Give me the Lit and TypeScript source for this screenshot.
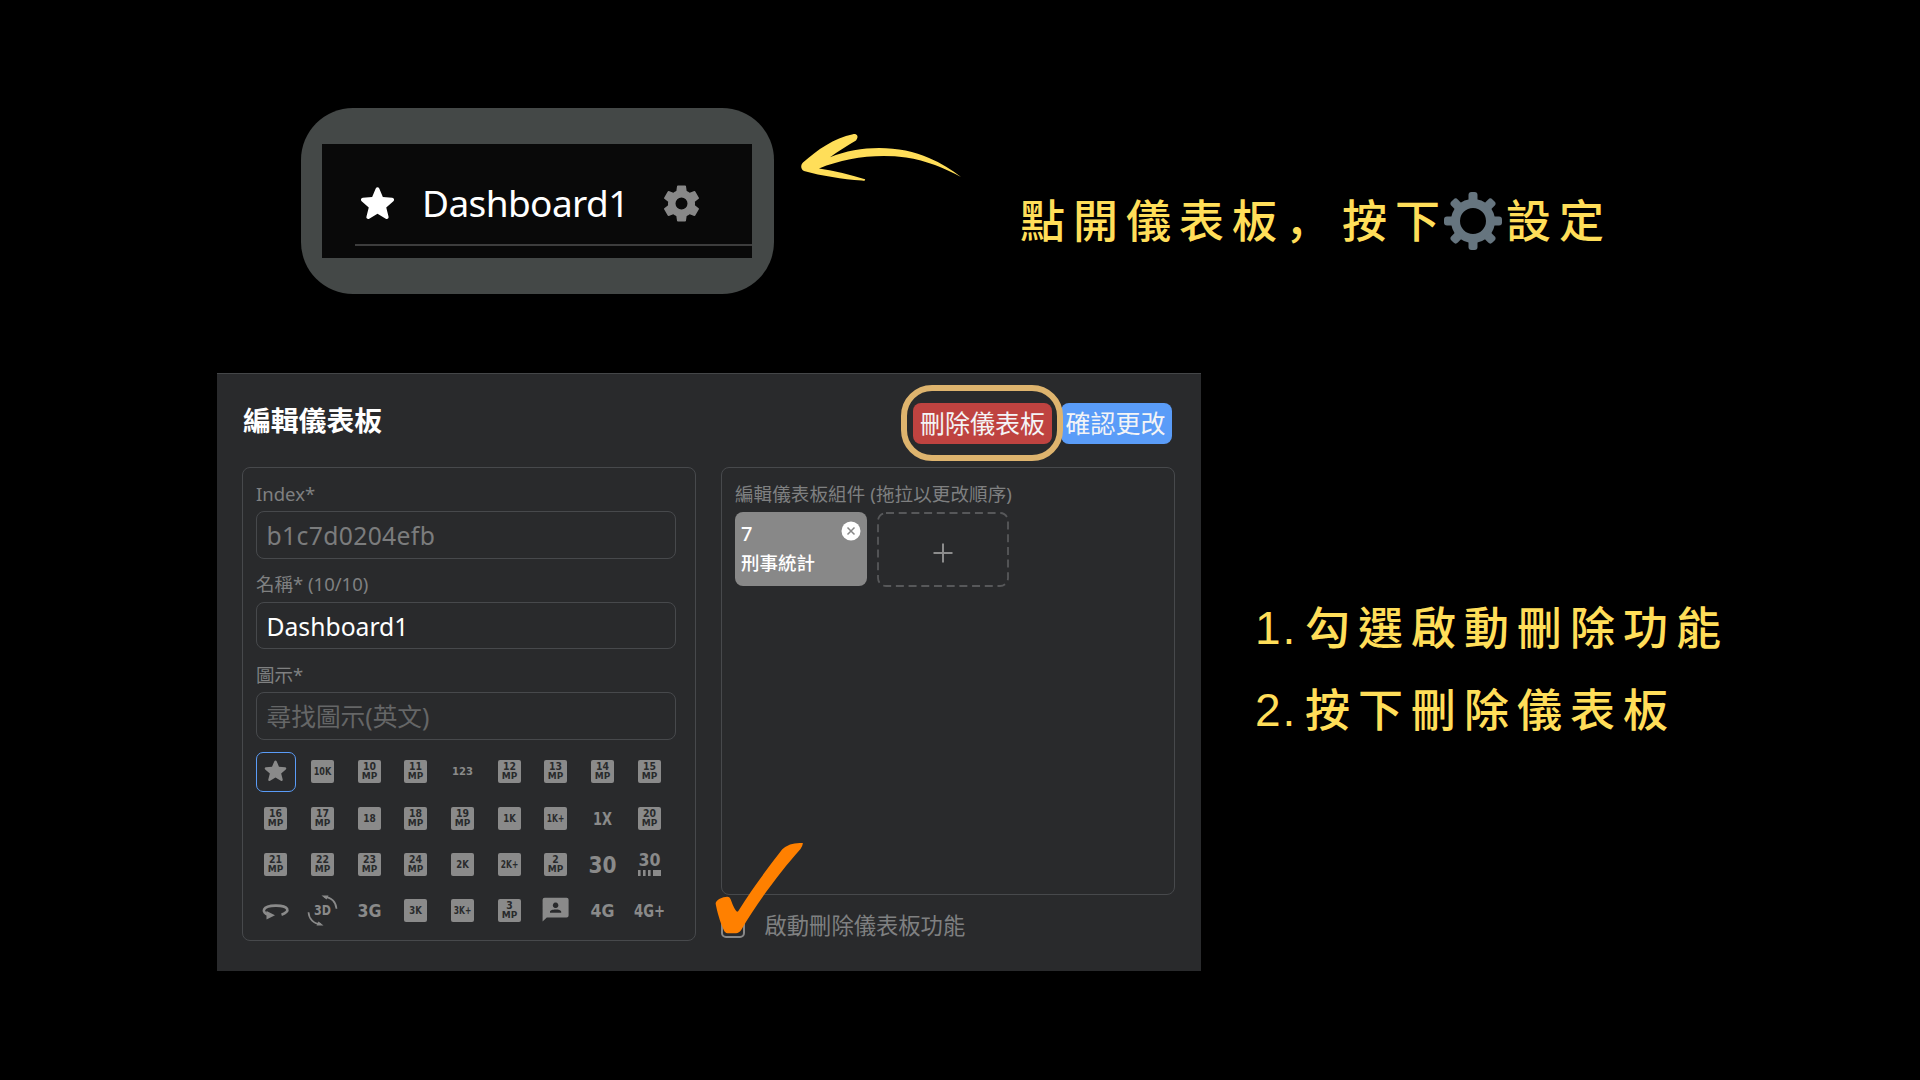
import { LitElement, html, svg, css } from "lit";
import { customElement } from "lit/decorators.js";

type Icon = { kind: string; a?: string; b?: string };

const mp = (a: string): Icon => ({ kind: "mp", a, b: "MP" });
const box = (a: string): Icon => ({ kind: "box", a });
const txt = (a: string): Icon => ({ kind: "txt", a });

const ICONS: Icon[] = [
  { kind: "star" }, box("10K"), mp("10"), mp("11"), { kind: "small", a: "123" }, mp("12"), mp("13"), mp("14"), mp("15"),
  mp("16"), mp("17"), box("18"), mp("18"), mp("19"), box("1K"), box("1K+"), txt("1X"), mp("20"),
  mp("21"), mp("22"), mp("23"), mp("24"), box("2K"), box("2K+"), mp("2"), { kind: "big", a: "30" }, { kind: "fps", a: "30" },
  { kind: "rotate" }, { kind: "rot3d" }, txt("3G"), box("3K"), box("3K+"), mp("3"), { kind: "person" }, txt("4G"), { kind: "wide", a: "4G+" },
];

const STAR = "M12 17.3 6.9 20.4Q6.1 20.8 5.5 20.3T5.2 19L6.6 13.4 2.2 9.6Q1.6 9 1.8 8.3T2.9 7.5L8.7 7 10.9 1.7Q11.3 1 12 1T13.1 1.7L15.3 7 21.1 7.5Q22 7.6 22.2 8.3T21.8 9.6L17.4 13.4 18.8 19Q19 19.8 18.5 20.3T17.1 20.4Z";
const GEAR = "M19.14 12.94c.04-.3.06-.61.06-.94 0-.32-.02-.64-.07-.94l2.03-1.58a.49.49 0 0 0 .12-.61l-1.92-3.32a.49.49 0 0 0-.59-.22l-2.39.96c-.5-.38-1.03-.7-1.62-.94l-.36-2.54a.48.48 0 0 0-.48-.41h-3.84a.47.47 0 0 0-.47.41l-.36 2.54c-.59.24-1.13.57-1.62.94l-2.39-.96a.48.48 0 0 0-.59.22L2.74 8.87a.47.47 0 0 0 .12.61l2.03 1.58c-.05.3-.09.63-.09.94s.02.64.07.94l-2.03 1.58a.49.49 0 0 0-.12.61l1.92 3.32c.12.22.37.29.59.22l2.39-.96c.5.38 1.03.7 1.62.94l.36 2.54c.05.24.24.41.48.41h3.84c.24 0 .44-.17.47-.41l.36-2.54c.59-.24 1.13-.56 1.62-.94l2.39.96c.22.08.47 0 .59-.22l1.92-3.32a.47.47 0 0 0-.12-.61zM12 15.2A3.200 3.200 0 1 1 12 8.800a3.200 3.200 0 0 1 0 6.400z";

@customElement("icon-glyph")
class IconGlyph extends LitElement {
  static properties = { icon: { attribute: false } };
  declare icon: Icon;
  static styles = css`
    :host { display: block; width: 31px; height: 31px; }
    svg { display: block; width: 31px; height: 31px; overflow: visible; fill: #8a8a8a; }
    text { font-family: "DejaVu Sans", sans-serif; font-weight: 700; text-anchor: middle; }
    .cut { fill: #292a2c; }
    .line { fill: none; stroke: #8a8a8a; stroke-width: 1.7; }
  `;
  private label(s: string, y: number, size: number, len: number, cls = "") {
    return svg`<text class=${cls} x="15.5" y=${y} font-size=${size} textLength=${len} lengthAdjust="spacingAndGlyphs">${s}</text>`;
  }
  private body() {
    const i = this.icon;
    const a = i.a ?? "";
    const square = svg`<rect x="4" y="4" width="23" height="23" rx="2" />`;
    switch (i.kind) {
      case "mp":
        return svg`${square}${this.label(a, 14.2, 9.8, a.length * 6.5, "cut")}${this.label("MP", 23, 9.4, 15.5, "cut")}`;
      case "box":
        return svg`${square}${this.label(a, 18.9, 9.8, a.length === 3 ? 17.5 : 12.5, "cut")}`;
      case "txt":
        return this.label(a, 21.5, 17, a === "1X" ? 19 : 24);
      case "wide":
        return svg`${this.label(a, 21.5, 17, 31)}`;
      case "big":
        return this.label(a, 24, 23.5, 28);
      case "small":
        return this.label(a, 19.2, 10.5, 21);
      case "fps":
        return svg`${this.label(a, 17, 17, 22)}<path d="M4 21h2.6v6H4zM9 21h2.6v6H9zM14 21h2.6v6H14zM19 21h8v6h-8z" />`;
      case "star":
        return svg`<g transform="translate(2.9 3.4) scale(1.05)"><path d=${STAR} /></g>`;
      case "rotate":
        return svg`<path class="line" style="stroke-width:2.6" d="M8.5 19.8C1 17.5 2 10.8 15.5 10.6s15.500 5.900 6 9.200" /><path d="M13.500 15.600v8.600l-8.500-4.300z" transform="translate(2 .2) rotate(180 9 20)" />`;
      case "rot3d":
        return svg`${this.label("3D", 20.4, 14, 17)}<path class="line" d="M17 1.800C24.500 2 29 7 29.500 13.800M14 29.200C6.500 29 2 24 1.500 17.200" /><path d="M14.500.6h7l-2 4zM16.500 30.400h-7l2-4z" />`;
      case "person":
        return svg`<path fill-rule="evenodd" d="M4.600 2.700h22a2 2 0 0 1 2 2v15.700a2 2 0 0 1-2 2H6.800L2.600 26.500V4.700a2 2 0 0 1 2-2zM15.600 7.500a2.800 2.800 0 1 0 .01 0zM10 17.800h11.200v-1c0-3-11.200-3-11.200 0z" />`;
    }
    return svg``;
  }
  render() {
    return html`<svg viewBox="0 0 31 31">${this.body()}</svg>`;
  }
}

@customElement("app-root")
class AppRoot extends LitElement {
  static styles = css`
    :host { display: block; width: 1920px; height: 1080px; background: #000; overflow: hidden;
      font-family: "Noto Sans", "Noto Sans CJK TC", sans-serif; --muted: #7f8081; --line: #47494c; }
    * { box-sizing: border-box; }
    svg { display: block; }
    .slide { width: 1920px; height: 1080px; padding-top: 108px; display: flex; flex-direction: column; gap: 79px; }
    .top { display: flex; height: 186px; padding-left: 301px; }
    .frame { width: 473px; height: 186px; border-radius: 52px; background: #444847; padding: 36px 22px 36px 21px; }
    .shot { height: 114px; background: #090909; padding: 0 0 0 33px; display: flex; flex-direction: column; }
    .bar { height: 102px; border-bottom: 2px solid #3d3d3d; display: flex; align-items: center; padding: 18px 0 0 5px; }
    .star { width: 35px; height: 35px; fill: #fff; flex: none; }
    .name { margin-left: 27px; width: 212px; flex: none; color: #fff; font-size: 37px; line-height: 50px; letter-spacing: -0.6px; white-space: nowrap; }
    .cog { margin-left: 25px; width: 45px; height: 45px; fill: #888; flex: none; }
    .arrow { margin: 24px 0 0 26px; width: 164px; height: 52px; fill: #ffde59; }
    .hand { color: #ffde59; font-family: "Noto Sans CJK TC", sans-serif; font-weight: 500; font-size: 45px; letter-spacing: 8px; line-height: 60px; white-space: nowrap; }
    .note { display: flex; align-items: center; height: 60px; margin: 83px 0 0 56px; }
    .note span { padding-bottom: 5px; }
    .comma { font-family: "Noto Sans CJK JP", sans-serif; margin-right: 4px; }
    .note svg { width: 60px; height: 60px; margin: 0 3px 0 -5px; }
    .bottom { display: flex; padding-left: 217px; }
    .panel { width: 984px; height: 598px; background: #292a2c; border-top: 1px solid #444648; padding: 0 25px; display: flex; flex-direction: column; }
    .head { height: 93px; flex: none; display: flex; align-items: center; padding: 6px 4px 0 1px; }
    h1 { margin: 0; flex: 1; color: #fff; font-size: 27.800px; line-height: 40px; font-weight: 700; padding-bottom: 7px; }
    .btn { position: relative; height: 40.500px; border-radius: 8px; color: #f4f4f6; font-size: 25px; line-height: 40px; text-align: center; white-space: nowrap; }
    .del { width: 139px; background: #bf4340; margin-right: 9px; }
    .ok { width: 111px; background: #5a9cf8; padding-right: 2px; }
    .ring { position: absolute; z-index: 1; left: -12px; top: -18px; width: 162px; height: 76px; border: 6px solid #deb46e; border-radius: 31px; }
    .cols { display: flex; gap: 24.500px; }
    .box { width: 454px; border: 1.500px solid var(--line); border-radius: 8px; }
    .form { height: 474px; padding: 11.500px 12.500px; display: flex; flex-direction: column; }
    .form > * { flex: none; }
    .label { color: var(--muted); font-size: 18.500px; line-height: 28px; height: 31.500px; white-space: nowrap; }
    .form .label { padding-left: .5px; line-height: 27px; }
    .field { width: 420.500px; height: 47.500px; border: 1.500px solid var(--line); border-radius: 8px; padding-left: 10px; font-size: 24.700px; line-height: 47px; white-space: nowrap; margin-bottom: 11.500px; color: #7b7c7d; }
    .code { letter-spacing: .35px; }
    .white { color: #fff; }
    .dim { color: #656667; margin-bottom: 9px; }
    .icons { display: grid; grid-template-columns: repeat(9, 46.700px); grid-auto-rows: 46.400px; margin: 0 0 0 -3px; }
    .cell { display: flex; align-items: center; justify-content: center; }
    .cell.on { margin: 3.400px; border: 1.500px solid #5a9cf8; border-radius: 7px; }
    .right { display: flex; flex-direction: column; }
    .parts { height: 428px; padding: 12px 13.500px; }
    .parts .label { letter-spacing: .12px; }
    .tiles { display: flex; gap: 10px; }
    .tile { width: 132px; height: 74.500px; border-radius: 8px; background: #888; color: #fff; padding: 7px 6px; font-size: 18.500px; line-height: 29px; font-weight: 500; }
    .tile-top { display: flex; justify-content: space-between; }
    .tile-top span { font-size: 20px; }
    .tile-top svg { width: 20px; height: 20px; margin: 2.500px 0 0; }
    .add { display: block; width: 132px; height: 75px; }
    .agree { display: flex; align-items: center; height: 24px; margin-top: 19px; color: var(--muted); font-size: 22.300px; line-height: 24px; }
    .check { position: relative; width: 24px; height: 24px; border: 2px solid #888; border-radius: 5px; margin: 0 19.500px 0 .5px; }
    .tick { position: absolute; left: -9px; top: -75px; width: 90px; height: 94px; fill: #ff8000; }
    .steps { margin: 223px 0 0 53px; }
    .step { height: 82px; display: flex; }
    .num { width: 51px; font-family: "Liberation Sans", "Noto Sans", sans-serif; font-size: 46px; letter-spacing: 2px; line-height: 65px; font-weight: 400; padding-left: 1px; }
  `;

  render() {
    return html`
      <div class="slide">
        <div class="top">
          <div class="frame"><div class="shot"><div class="bar">
            <svg class="star" viewBox="1.200 .5 21.600 21"><path d=${STAR} /></svg>
            <div class="name">Dashboard1</div>
            <svg class="cog" viewBox="0 0 24 24"><path d=${GEAR} /></svg>
          </div></div></div>
          <svg class="arrow" viewBox="800 132 164 52"><path d="M804 171C800.500 169 800.500 165 803 162.500C817 150 834 138 853 134.200C856.500 133.500 859.500 136 856 140.500C848 145.500 838 151 830 157.300C862 144 902 145.500 929 158C941 163 952 170 961 177C945 168.500 926 160.500 906 157.600C876 153.500 845 158 819 168.500C835 171 850 174.500 865 179.200Q866 181 862 180.600C842 179 822 176 804 171Z" /></svg>
          <div class="hand note"><span>點開儀表板</span><span class="comma" lang="ja">，</span><span>按下</span><svg viewBox="0 0 60 60" fill="#66757f">
            <circle cx="30" cy="30" r="17.500" fill="none" stroke="#66757f" stroke-width="9" />
            ${[0, 45, 90, 135, 180, 225, 270, 315].map((d) => svg`<path transform="rotate(${d} 30 30)" d="M25.500 11V4q0-3 3-3h3q3 0 3 3v7z" />`)}
          </svg><span>設定</span></div>
        </div>
        <div class="bottom">
          <div class="panel">
            <div class="head">
              <h1>編輯儀表板</h1>
              <div class="btn del">刪除儀表板<div class="ring"></div></div>
              <div class="btn ok">確認更改</div>
            </div>
            <div class="cols">
              <div class="box form">
                <div class="label">Index*</div><div class="field code">b1c7d0204efb</div>
                <div class="label">名稱* (10/10)</div><div class="field white">Dashboard1</div>
                <div class="label">圖示*</div><div class="field dim">尋找圖示(英文)</div>
                <div class="icons">${ICONS.map((i, n) => html`<div class="cell ${n === 0 ? "on" : ""}"><icon-glyph .icon=${i}></icon-glyph></div>`)}</div>
              </div>
              <div class="right">
                <div class="box parts">
                  <div class="label">編輯儀表板組件 (拖拉以更改順序)</div>
                  <div class="tiles">
                    <div class="tile">
                      <div class="tile-top"><span>7</span><svg viewBox="0 0 20 20"><circle cx="10" cy="10" r="9.500" fill="#fff" /><path d="M6.500 6.500l7 7m0-7l-7 7" stroke="#888" stroke-width="1.500" /></svg></div>
                      <div>刑事統計</div>
                    </div>
                    <svg class="add" viewBox="0 0 132 75"><rect x="1" y="1" width="130" height="73" rx="8" fill="none" stroke="#57585a" stroke-width="1.800" stroke-dasharray="8 4.700" /><path d="M56.500 41h19M66 31.500v19" stroke="#8c8c8c" stroke-width="2" /></svg>
                  </div>
                </div>
                <div class="agree"><div class="check"><svg class="tick" viewBox="714 841 90 94"><path d="M802.700 843Q803.500 844 800.500 849C780 872 757 903 741.500 929.500Q739 933.300 736 933.300H727.500Q725 933.300 723.500 929.500C720 922 717 911 715.700 904C715 900 723 896.500 727.500 896.700Q729.500 896.700 730.500 899C732 903 734.500 909.500 736.800 911.600Q738 912 739 910C752 889 767 869 782.300 849.300Q790 842 802.700 843Z" /></svg></div>啟動刪除儀表板功能</div>
              </div>
            </div>
          </div>
          <div class="hand steps">
            <div class="step"><span class="num">1.</span><span>勾選啟動刪除功能</span></div>
            <div class="step"><span class="num">2.</span><span>按下刪除儀表板</span></div>
          </div>
        </div>
      </div>`;
  }
}
